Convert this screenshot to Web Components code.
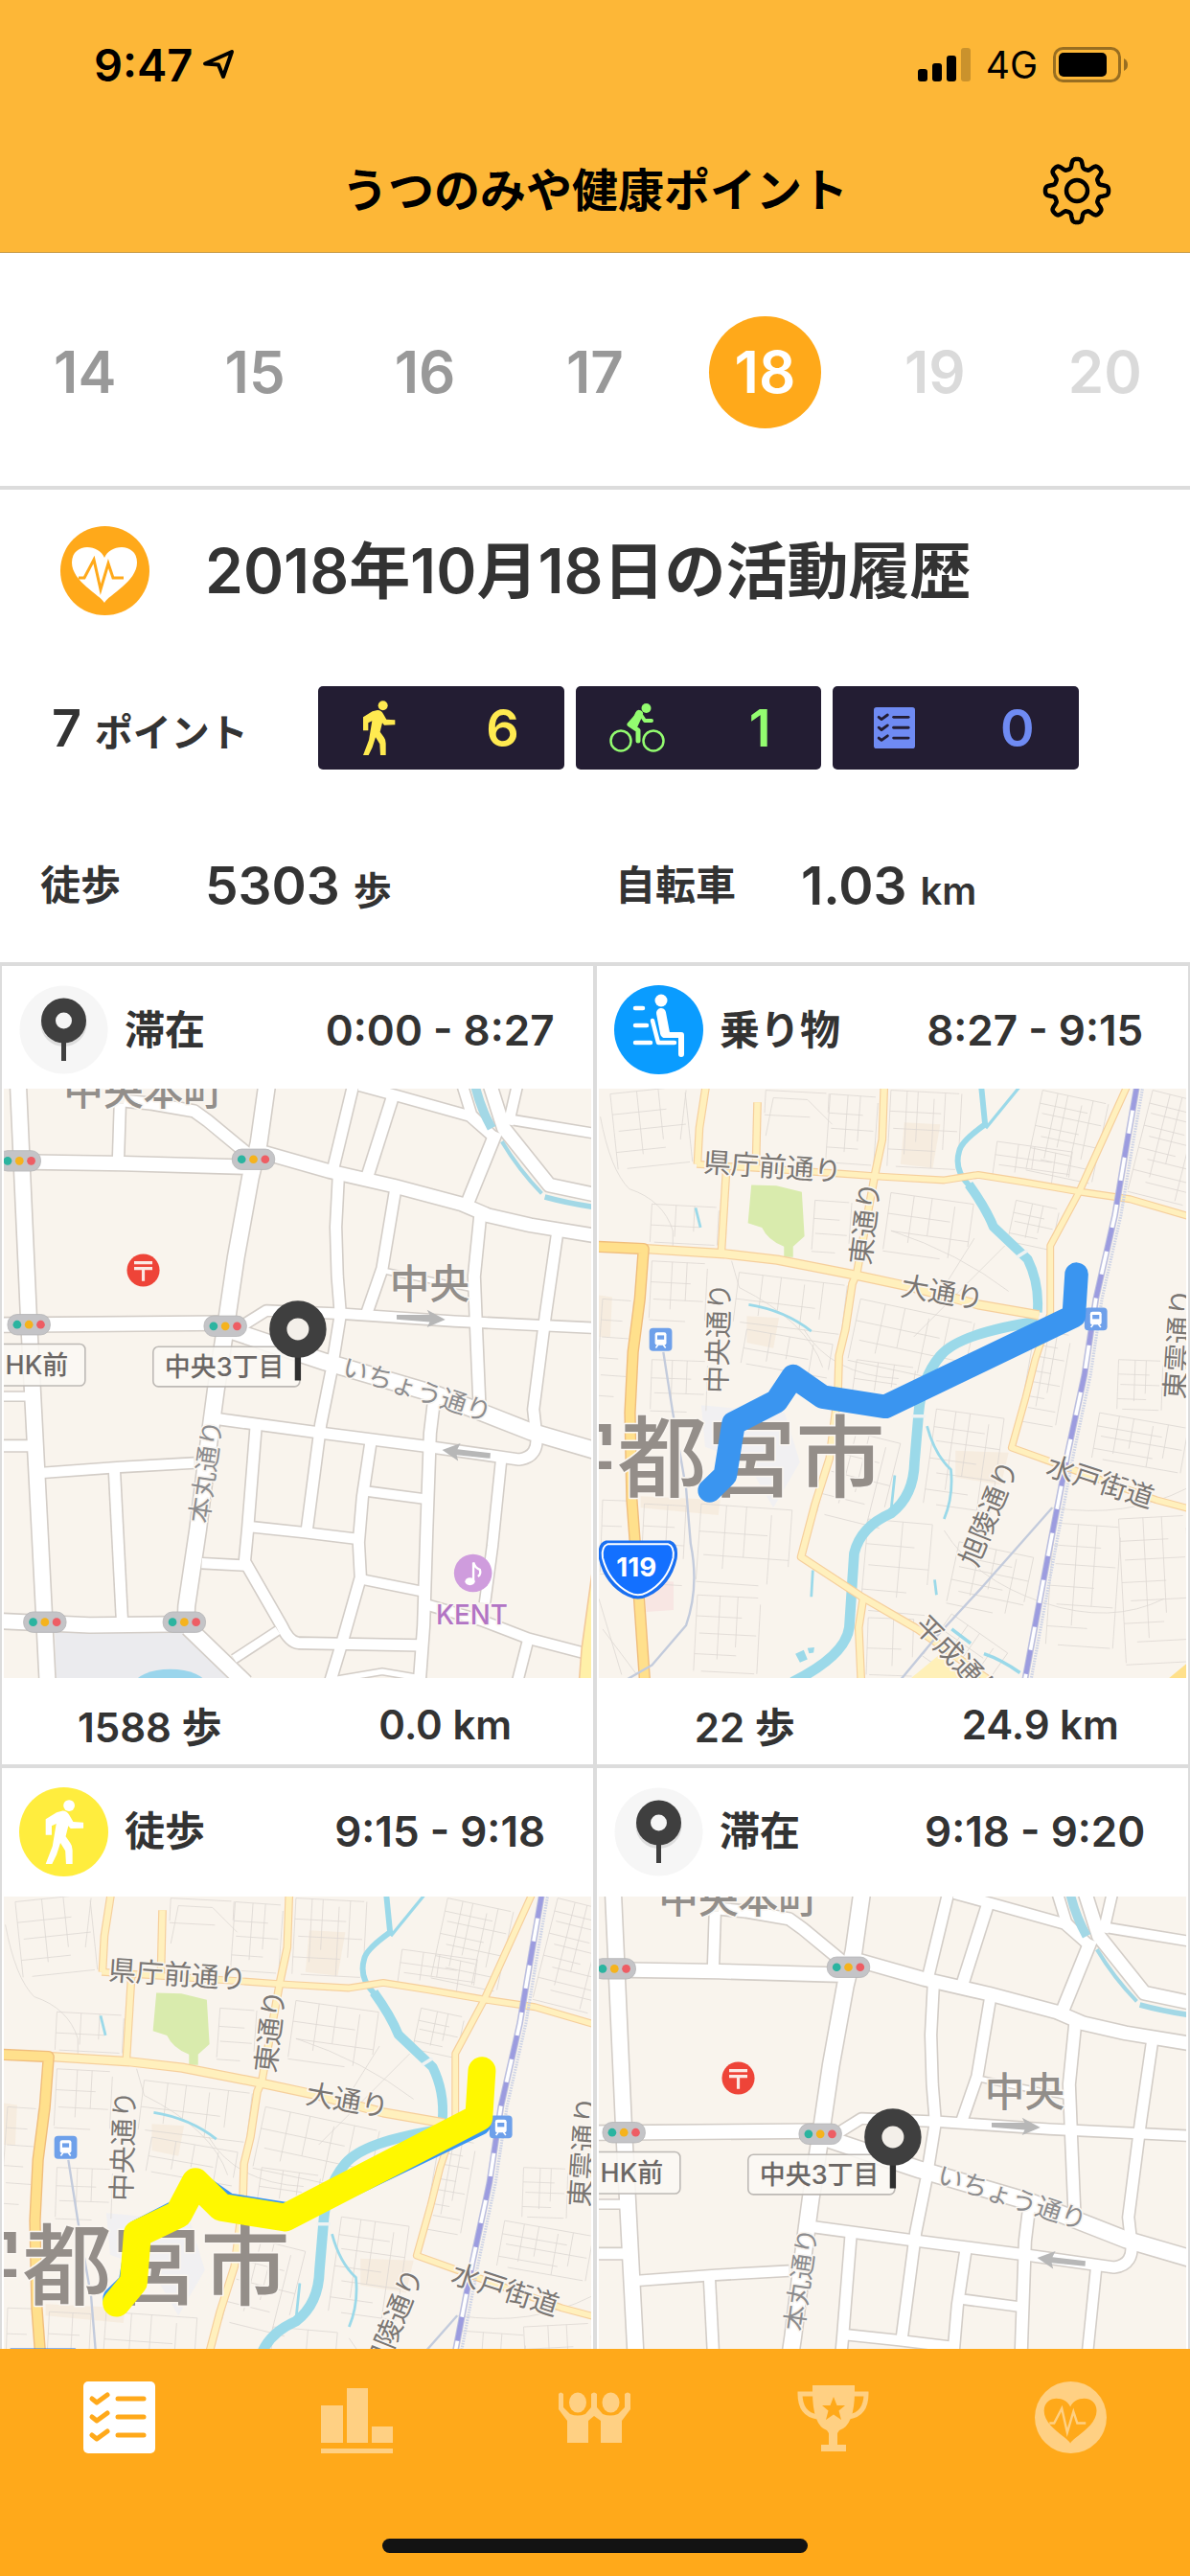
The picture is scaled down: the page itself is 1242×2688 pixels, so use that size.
<!DOCTYPE html>
<html lang="ja">
<head>
<meta charset="utf-8">
<meta name="viewport" content="width=device-width">
<title>うつのみや健康ポイント</title>
<style>
  html, body { margin: 0; height: 100%; }
  body { font-family: Inter, "Noto Sans CJK JP", sans-serif; color: #333; background: #fff; }
</style>
</head>
<body>
<health-app></health-app>

<script>
const define = (name, html, setup) => {
  const template = document.createElement('template');
  customElements.define(name, class extends HTMLElement {
    connectedCallback() {
      if (this.shadowRoot) return;
      template.innerHTML = typeof html === 'function' ? html(this) : html;
      this.attachShadow({ mode: 'open' }).append(template.content.cloneNode(true));
      if (setup) setup(this);
    }
  });
};

/* ---------- icons ---------- */

function gearPath() {
  const pts = [];
  for (let i = 0; i < 240; i++) {
    const a = i / 240 * Math.PI * 2;
    const wave = Math.tanh(1.9 * Math.cos(8 * a)) / Math.tanh(1.9);
    const r = 28.4 + 4.6 * wave;
    pts.push((36 + r * Math.sin(a)).toFixed(1) + ' ' + (36 - r * Math.cos(a)).toFixed(1));
  }
  return 'M' + pts.join('L') + 'Z';
}

const HEART = 'M46 80C42 72 12 58 12 38C12 27 20 22 28 22C36 22 43 26 46 33C49 26 56 22 64 22C72 22 80 27 80 38C80 58 50 72 46 80Z';
const PULSE = 'M19 54H25L35 35L42 66L50 39L55 54H66';
const WALK = '<circle cx="183" cy="108" r="15"/><path d="M150 126L166 122Q178 122 184 134L194 151L221 153V168L187 169L181 162L174 190L186 207Q192 215 192 226V263H175L173 228L160 207L150 238L138 263H121L139 216L149 156L137 162V186H121V144Z"/>';
const CHECKS = [18, 37, 56].map(y => `<path d="M9 ${y}L14 ${y + 4}L25 ${y - 4}" stroke-width="5"/><path d="M36 ${y}H63" stroke-width="5"/>`).join('');

const ICONS = {
  location: ['0 0 34 32', '<path d="M31 3L3 15.500L17 16.500L22 29Z" fill="none" stroke="currentColor" stroke-width="4" stroke-linejoin="round"/>'],
  signal: ['0 0 55 35', '<rect y="22" width="10" height="13" rx="3"/><rect x="15" y="16" width="10" height="19" rx="3"/><rect x="30" y="8" width="10" height="27" rx="3"/><rect x="45" width="10" height="35" rx="3" opacity=".2"/>'],
  battery: ['0 0 79 37', '<rect x="1.500" y="1.500" width="68" height="34" rx="9" fill="none" stroke="currentColor" stroke-width="3" opacity=".4"/><rect x="6" y="6" width="50" height="25" rx="5"/><path d="M74 12Q78 14 78 18.500T74 25Z" opacity=".4"/>'],
  gear: ['0 0 72 72', `<g fill="none" stroke="currentColor" stroke-width="4.500" stroke-linejoin="round"><path d="${gearPath()}"/><circle cx="36" cy="36" r="11"/></g>`],
  heart: ['0 0 93 93', `<circle cx="46.500" cy="46.500" r="46.500"/><path d="${HEART}" fill="var(--cut)"/><path d="${PULSE}" fill="none" stroke="currentColor" stroke-width="3"/>`],
  walk: ['112 90 120 178', WALK],
  bike: ['0 0 58 52', '<g fill="none" stroke="currentColor" stroke-linecap="round" stroke-linejoin="round"><circle cx="12" cy="39" r="10.500" stroke-width="2.500"/><circle cx="46" cy="39" r="10.500" stroke-width="2.500"/><path d="M29 13L21 22L30 28V39" stroke-width="5"/><path d="M31 11L26 22" stroke-width="8"/><path d="M33 12L37 18H44" stroke-width="4"/></g><circle cx="38.500" cy="5" r="5"/>'],
  list: ['0 0 75 75', `<rect width="75" height="75" rx="5"/><g fill="none" stroke="var(--cut)" stroke-linecap="round" stroke-linejoin="round">${CHECKS}</g>`],
  bars: ['0 0 75 75', '<path d="M0 25H23V64H0ZM27 7H49V64H27ZM53 47H75V64H53ZM0 70H75V75H0Z"/>'],
  people: ['0 0 75 75', '<ellipse cx="20" cy="22" rx="9" ry="10.500"/><ellipse cx="54.500" cy="22" rx="9" ry="10.500"/><path d="M9 64V41L0 29V13Q2 10 5 13V27L12 34Q20 37 28 34L34 27V13Q37 10 40 13V27L46 34Q54 37 62 34L69 27V13Q72 10 75 13V29L66 41V64H44V41L37 36L31 41V64Z"/>'],
  trophy: ['0 0 75 75', '<path d="M16 4H60V10Q60 46 44 51L42 54V66H51V73H25V66H33V54L31 51Q16 46 16 10Z"/><path d="M18 13H3Q3 34 21 37M57 13H72Q72 34 54 37" fill="none" stroke="currentColor" stroke-width="5"/><path d="M38 16L41.500 25H50L43.500 30.500L46 40L38 34.500L30 40L32.500 30.500L26 25H34.500Z" fill="var(--cut)"/>'],
  stay: ['0 0 93 93', '<circle cx="46.500" cy="46.500" r="46" fill="#f6f6f6"/><g fill="#ddd"><circle cx="46.500" cy="40" r="24"/></g><path d="M44 56H49V79H44Z"/><circle cx="46.500" cy="37" r="23.500"/><circle cx="46.500" cy="37" r="8.500" fill="#f6f6f6"/>'],
  ride: ['0 0 93 93', '<circle cx="46.500" cy="46.500" r="46.500" fill="#0a9cff"/><circle cx="49" cy="16" r="6.500" fill="#fff"/><g fill="none" stroke="#fff" stroke-linecap="round" stroke-linejoin="round"><path d="M49 29L53 50" stroke-width="10"/><path d="M54 52H70V72" stroke-width="6"/><path d="M40 37L46 60H63M22 24H30M22 42H34M22 60H38" stroke-width="4.500"/></g>'],
  steps: ['0 0 93 93', `<circle cx="46.500" cy="46.500" r="46.500" fill="#ffed3e"/><g fill="#fff" transform="translate(-20 -23.500) scale(.394)">${WALK}</g>`],
};

define('app-icon', el => {
  const [box, body] = ICONS[el.getAttribute('name')];
  return `<style>:host{display:block;flex:none;--cut:#fff}svg{display:block;width:100%;height:100%;fill:currentColor}</style>
  <svg viewBox="${box}" aria-hidden="true">${body}</svg>`;
});

/* ---------- chrome ---------- */

define('status-bar', `<style>
  :host { display: flex; align-items: center; justify-content: space-between; height: 134px; box-sizing: border-box; padding: 0 64px 0 98px; color: #000; }
  div { display: flex; align-items: center; }
  time { font-size: 47px; font-weight: 600; }
  .net { font-size: 39px; margin: 0 16px; }
  .loc { width: 34px; height: 32px; margin-left: 10px; }
  .sig { width: 55px; height: 35px; }
  .bat { width: 79px; height: 37px; }
</style>
<div><time>9:47</time><app-icon class="loc" name="location"></app-icon></div>
<div><app-icon class="sig" name="signal"></app-icon><span class="net">4G</span><app-icon class="bat" name="battery"></app-icon></div>`);

define('title-bar', `<style>
  :host { display: grid; grid-template-columns: 1fr auto 1fr; align-items: center; height: 130px; box-sizing: border-box; padding: 0 82px; color: #000; border-bottom: 1px solid #c9a052; }
  h1 { grid-column: 2; margin: 0; font-size: 48px; font-weight: 700; line-height: 64px; }
  button { justify-self: end; padding: 0; border: 0; background: none; color: inherit; }
  app-icon { width: 72px; height: 72px; }
</style>
<h1><slot></slot></h1>
<button aria-label="設定"><app-icon name="gear"></app-icon></button>`);

define('day-strip', `<style>
  :host { display: grid; grid-template-columns: repeat(7, 1fr); place-items: center; height: 247px; box-sizing: border-box; padding-top: 6px; border-bottom: 4px solid #dcdcdc; }
  button { width: 117px; height: 117px; padding: 0; border: 0; border-radius: 50%; background: none; font: 600 60px/117px Inter, sans-serif; color: #999; }
  .on { background: #ffa91a; color: #fff; }
  :disabled { color: #dadada; }
</style>`, el => {
  for (let d = 14; d <= 20; d++) {
    const b = document.createElement('button');
    b.textContent = d;
    if (d === 18) b.className = 'on';
    b.disabled = d > 18;
    el.shadowRoot.append(b);
  }
});

define('point-tile', el => `<style>
  :host { display: grid; grid-template-columns: 1fr 1fr; place-items: center; height: 87px; border-radius: 5px; background: #231d33; font-size: 54px; font-weight: 600; }
  app-icon { width: var(--w); height: var(--h); --cut: #231d33; }
</style>
<app-icon name="${el.getAttribute('icon')}"></app-icon><span><slot></slot></span>`);

define('day-summary', `<style>
  :host { display: block; }
  .head { display: flex; align-items: center; gap: 58px; height: 169px; padding-left: 63px; }
  .head app-icon { width: 93px; height: 93px; color: #ffa91a; }
  h2 { margin: 0; font-size: 64px; font-weight: 600; line-height: 90px; white-space: nowrap; }
  .points { display: flex; align-items: center; height: 159px; padding: 0 116px 0 54px; }
  .points p { flex: 0 0 278px; margin: 0; font-size: 54px; font-weight: 600; }
  small { font-size: 40px; font-weight: 600; }
  .tiles { flex: 1; display: grid; grid-template-columns: repeat(3, 1fr); gap: 12px; }
  .walk { color: #ffea50; --w: 40px; --h: 60px; }
  .bike { color: #93fc70; --w: 58px; --h: 52px; }
  .list { color: #6f8bf3; --w: 43px; --h: 43px; }
  dl { display: grid; grid-template-columns: 172fr 428fr 194fr 406fr; align-items: start; height: 165px; box-sizing: border-box; margin: 0; padding: 45px 0 0 42px; }
  dt { font-size: 42px; font-weight: 600; line-height: 80px; }
  dd { margin: 0; font-size: 55px; font-weight: 600; line-height: 80px; }
</style>
<div class="head"><app-icon name="heart"></app-icon><h2>2018年10月18日の活動履歴</h2></div>
<div class="points"><p>7 <small>ポイント</small></p>
  <div class="tiles">
    <point-tile class="walk" icon="walk">6</point-tile>
    <point-tile class="bike" icon="bike">1</point-tile>
    <point-tile class="list" icon="list">0</point-tile>
  </div>
</div>
<dl><dt>徒歩</dt><dd>5303 <small>歩</small></dd><dt>自転車</dt><dd>1.03 <small>km</small></dd></dl>`);

/* ---------- maps ---------- */

const MAP_CSS = `:host{display:block}svg{display:block;width:100%;height:auto}
  text{font-family:Inter,"Noto Sans CJK JP",sans-serif;paint-order:stroke;stroke:#faf6f1;stroke-width:8px;stroke-linejoin:round}
  .r{fill:none;stroke-linejoin:round}`;

const lines = (list, color, extra) => list.map(([w, d]) =>
  `<path class="r" d="M${d}" stroke="${color}" stroke-width="${w + extra}"/>`).join('');

const STREETS = [
  [40, '52 350L79 950L110 1545L129 1920'], [36, '0 548L330 553L650 562'], [28, '320 395L315 550'],
  [30, '330 388L400 395L515 415L550 440L665 535'],
  [42, '706 350L685 500L663 590L625 800L603 950L572 1150L548 1330L525 1516L495 1718L493 1770'],
  [34, '690 522L730 533L870 573L1040 612L1220 660L1290 690L1400 715L1570 743'],
  [28, '933 350L880 570'], [28, '895 585L888 720L892 850L900 950L876 1100L848 1240L812 1515'],
  [30, '1040 370L970 590'], [28, '1045 620L1010 830L970 945'], [26, '950 348L1050 375L1240 428L1305 485'],
  [26, '1222 350L1245 425L1305 485'], [34, '1295 350L1330 460L1450 610L1570 635'], [26, '1365 350L1342 450'],
  [24, '1345 437L1570 474'], [32, '1310 470L1235 655'], [30, '1268 690L1252 850L1258 1000L1266 1190'],
  [28, '1471 735L1440 950L1408 1200L1415 1262Q1425 1325 1370 1332L1130 1298L850 1262L575 1225'],
  [36, '0 978L590 973'], [26, '625 990L705 940L900 948L1200 968L1570 986'],
  [42, '605 990L860 1075L1150 1160L1400 1258L1570 1308'],
  [30, '1146 1180L1136 1263L1127 1516L1119 1769L1108 1920'],
  [28, '678 1240L656 1516L648 1600L745 1769Q765 1813 790 1815L1110 1821'],
  [26, '535 1605L650 1611'], [26, '655 1508L805 1524L945 1541'],
  [28, '980 1285L958 1432L948 1550L953 1642L905 1811L872 1920'],
  [24, '965 1415L1125 1436'], [24, '955 1647L1120 1680'], [22, '620 1857L735 1782'],
  [40, '500 1775L650 1920'], [38, '0 1757L240 1768L500 1765'], [26, '115 1367L320 1352L515 1341'],
  [28, '305 1360L325 1750'], [22, '0 1166L85 1166'], [28, '0 1296L95 1296'],
  [26, '1323 1335L1300 1560L1280 1710'], [26, '1120 1712L1270 1755L1395 1803L1545 1842'],
  [26, '1395 1803L1365 1920'], [14, '880 1912L1010 1890L1110 1907'], [12, '1012 835L1245 882'],
];

const lights = (x, y) => `<g transform="translate(${x} ${y})"><rect x="-56" y="-27" width="112" height="54" rx="25" fill="#c4c4c7" stroke="#b4b4b6" stroke-width="2"/>
  <circle cx="-31" r="11" fill="#2bb4a0"/><circle r="11" fill="#f5b31d"/><circle cx="31" r="11" fill="#ee5d64"/></g>`;

define('stay-map', `<style>${MAP_CSS}
  .area{font-size:105px;font-weight:500;fill:#928e8a}.road{font-size:68px;fill:#8c8c8e}.stop{font-size:68px;font-weight:500;fill:#6b6765;stroke:none}
</style>
<svg viewBox="14 356 1546 1551" role="img">
  <rect x="0" y="340" width="1570" height="1600" fill="#f9f4ed"/>
  <path d="M148 1785H505L625 1920H152Z" fill="#ebebee"/><ellipse cx="452" cy="1926" rx="95" ry="42" fill="#9ad5ec"/>
  ${lines(STREETS, '#d3cdc7', 8)}
  ${lines(STREETS, '#fff', 0)}
  <g class="r" stroke="#a3d8e6"><path d="M1255 350Q1270 410 1298 460" stroke-width="24"/><path d="M1325 495Q1370 570 1430 632" stroke-width="10"/><path d="M1438 641Q1500 658 1570 668" stroke-width="14"/></g>
  <path d="M1572 1560L1535 1830L1528 1920H1572Z" fill="#fff0a8" stroke="#f3c99a" stroke-width="4"/>
  ${lights(55, 546)}${lights(671, 542)}${lights(80, 977)}${lights(597, 981)}${lights(122, 1760)}${lights(489, 1760)}
  <circle cx="381" cy="834" r="43" fill="#ee4438"/><path d="M357 814H405M357 829H405M381 829V862" stroke="#fbe9e4" stroke-width="8"/>
  <g fill="#b7b7b7"><path d="M1048 951H1135L1128 938L1176 964L1128 984L1135 970L1048 963Z"/><path d="M1295 1315L1208 1305L1216 1289L1168 1307L1210 1336L1206 1320L1294 1329Z"/></g>
  <text class="area" x="171" y="399">中央本町</text>
  <text class="area" x="1030" y="909">中央</text>
  <text class="road" transform="translate(900 1108) rotate(18)">いちょう通り</text>
  <text class="road" text-anchor="middle" transform="translate(570 1367) rotate(-82)">本丸通り</text>
  <g fill="#fbf8f4" fill-opacity=".88" stroke="#bdb9b5" stroke-width="4"><rect x="-40" y="1028" width="268" height="110" rx="14"/><rect x="407" y="1035" width="386" height="105" rx="14"/></g>
  <text class="stop" x="18" y="1108">HK前</text>
  <text class="stop" x="437" y="1112">中央3丁目</text>
  <path d="M780 1050H796V1124H780Z" fill="#2f2f2f"/><circle cx="788" cy="989" r="52" fill="#f3efe9" stroke="#3f3f3f" stroke-width="46"/>
  <circle cx="1249" cy="1631" r="50" fill="#cf9cdd"/><ellipse cx="1241" cy="1653" rx="13" ry="10" fill="#fff"/><path d="M1250 1653V1603Q1255 1618 1267 1622Q1271 1634 1262 1640" fill="none" stroke="#fff" stroke-width="6"/>
  <text x="1246" y="1766" text-anchor="middle" font-size="70" font-weight="500" fill="#b274c4">KENT</text>
</svg>`);

function blocks(x, y, w, h, angle, cols, rows) {
  let d = '';
  for (let i = 0; i <= cols; i++) {
    const px = Math.round(w * i / cols + (i % 2 ? 7 : 0)), cut = (i * 37) % 5 * h / 12;
    d += `M${px} ${Math.round(i % 3 ? 0 : cut)}V${Math.round(i % 3 ? h - cut : h)}`;
  }
  for (let j = 0; j <= rows; j++) {
    const py = Math.round(h * j / rows + (j % 2 ? 5 : 0)), cut = (j * 53) % 7 * w / 16;
    d += `M${Math.round(j % 2 ? 0 : cut)} ${py}H${Math.round(j % 2 ? w - cut : w)}`;
  }
  return `<path transform="translate(${x} ${y}) rotate(${angle})" d="${d}"/>`;
}

const LANES = [
  blocks(40, 360, 190, 200, -6, 3, 4), blocks(450, 350, 160, 60, 3, 1, 1), blocks(620, 360, 120, 180, 4, 3, 4),
  blocks(780, 350, 180, 200, 3, 5, 4), blocks(1180, 350, 170, 210, 12, 5, 7), blocks(1060, 485, 200, 90, 8, 4, 3),
  blocks(1470, 350, 160, 270, 14, 4, 9), blocks(150, 650, 170, 100, 3, 3, 2), blocks(580, 640, 90, 130, 4, 1, 3),
  blocks(780, 620, 220, 150, 8, 4, 3), blocks(1110, 640, 110, 110, 12, 3, 4), blocks(20, 900, 75, 250, 4, 1, 5),
  blocks(150, 800, 140, 150, 3, 3, 3), blocks(380, 830, 280, 130, 7, 5, 2), blocks(400, 980, 230, 90, 10, 4, 2),
  blocks(700, 900, 300, 160, 12, 5, 3), blocks(690, 1060, 150, 90, 8, 3, 2), blocks(150, 1060, 140, 130, 2, 3, 3),
  blocks(900, 1190, 180, 250, 8, 4, 6), blocks(1160, 980, 90, 240, 10, 3, 7), blocks(1380, 1060, 110, 130, 2, 3, 4),
  blocks(1330, 1200, 230, 120, 10, 5, 4), blocks(640, 1240, 170, 230, 14, 4, 4), blocks(20, 1430, 70, 190, 2, 1, 3),
  blocks(130, 1440, 110, 210, 3, 2, 4), blocks(280, 1440, 240, 200, 4, 4, 3), blocks(270, 1680, 160, 200, 3, 3, 4),
  blocks(720, 1480, 170, 240, 5, 2, 4), blocks(960, 1540, 200, 160, 12, 4, 5), blocks(1210, 1490, 170, 320, 4, 3, 6),
  blocks(1380, 1480, 170, 380, -3, 3, 7), blocks(940, 1730, 180, 130, 35, 4, 3), blocks(720, 1740, 120, 150, 2, 2, 2),
  '<path d="M14 420Q40 560 90 610Q180 640 205 720V760M240 350L225 480M450 470L470 370L560 375L625 440M780 720Q960 780 1090 880M1000 740L900 900M840 1000Q960 880 1080 760M550 980Q620 1100 800 1110M1205 1450Q1400 1480 1558 1400M360 800L380 870Q560 960 600 1080M20 1770L110 1890M10 1690L70 1890M920 1510Q1000 1640 1180 1700T1500 1690"/>',
].join('');

const AVENUES = [
  [16, '292 340L275 450L270 545'], [16, '428 382L424 550'], [14, '268 545L650 570L760 578L920 587L1010 573L1130 592L1280 618L1410 637L1570 684'],
  [16, '346 560L333 775'], [16, '762 340L757 480L738 570L690 832L678 860L660 980L643 1050L640 1150L618 1320L580 1440L543 1580L700 1683L850 1770L1060 1920'],
  [14, '1402 340L1275 620L1200 760L1200 940L1160 1060L1135 1160L1098 1292L1190 1325L1480 1430L1570 1454'],
  [16, '708 1682L695 1766L702 1920'], [20, '135 768L340 781L480 797L690 838L830 868L1010 915L1170 943'],
];
const HIGHWAY = [[24, '0 762L128 768L118 900L100 1040L92 1200L97 1430L112 1632L132 1920']];
const RAIL = 'M1428 340L1400 500L1370 680L1320 900L1290 1100L1245 1310L1200 1545L1130 1920';

const station = (x, y) => `<g transform="translate(${x} ${y})"><rect x="-30" y="-30" width="60" height="60" rx="10" fill="#6ea0ea"/><rect x="-15" y="-19" width="30" height="34" rx="6" fill="#fff"/><path d="M-9 -11H9V0H-9Z" fill="#6ea0ea"/><path d="M-13 22L-7 14M13 22L7 14" stroke="#fff" stroke-width="4"/></g>`;

define('route-map', el => {
  const walked = el.getAttribute('mode') === 'walk';
  return `<style>${MAP_CSS}
  .road{font-size:73px;fill:#7a7673}.city{font-size:235px;font-weight:500;fill:#948e89}
</style>
<svg viewBox="10 346 1548 1553" role="img">
  <rect x="0" y="330" width="1580" height="1600" fill="#f9f4ed"/>
  <g fill="#f6ecdf"><path d="M815 435L910 440L890 555L805 545Z"/><path d="M400 945L485 950L470 1030L400 1015Z"/><path d="M950 1300L1090 1305L1070 1390L950 1370Z"/><path d="M10 890L45 895L40 1000H10Z"/><path d="M120 1420L330 1430L325 1470L120 1450Z"/></g>
  <path d="M130 1640L207 1645V1720L135 1725Z" fill="#f8e6e3"/><path d="M280 1180L500 1200L540 1330L470 1450L400 1330L290 1290Z" fill="#f1f0f2"/>
  <g class="r" stroke="#ddd8d3" stroke-width="2">${LANES}</g>
  <path d="M412 600L478 602L545 618L552 735L522 762V790H498V762Q455 745 440 712L403 700Z" fill="#d9ebad"/>
  <g class="r" stroke="#9bd9e9"><path d="M1018 340L1028 440Q965 485 960 510Q945 560 985 600" stroke-width="15"/><path d="M1120 340L1030 450" stroke-width="8"/>
    <path d="M985 598Q1030 660 1050 710L1140 795Q1172 860 1166 935" stroke-width="25"/><path d="M1166 960Q960 990 910 1050Q860 1110 853 1200L842 1330Q840 1420 780 1465Q700 1500 683 1570L670 1766Q660 1840 520 1910" stroke-width="27"/>
    <path d="M875 1235Q895 1310 938 1350Q945 1420 920 1480M790 1365L780 1460M574 1615L570 1685M895 1640L900 1680M265 660L278 712M405 915Q500 930 570 985" stroke-width="7"/><path d="M940 1770L990 1808M1025 1835Q1070 1850 1120 1885" stroke-width="9"/></g>
  <path d="M528 1835L550 1825L560 1850L540 1858ZM560 1820L578 1818L576 1832L564 1834Z" fill="#9bd9e9"/><path d="M1112 790L1140 772M835 1209H870" stroke="#eef2f2" stroke-width="9"/>
  <path d="M820 1910L905 1840L1000 1910Z" fill="#fff0b8"/><path d="M1500 1910L1560 1860V1910Z" fill="#ffe08a"/>
  ${lines(AVENUES, '#f6cf9c', 6)}${lines(AVENUES, '#fff0bd', 0)}
  ${lines(HIGHWAY, '#f0bd7c', 7)}${lines(HIGHWAY, '#ffe08c', 0)}
  <g class="r"><path d="M180 1040L205 1200L240 1400L252 1545Q275 1660 240 1760L150 1865L80 1905M1205 1450L1020 1660L900 1790L800 1910" stroke="#c3cbdc" stroke-width="6"/>
    <path d="${RAIL}" transform="translate(16 0)" stroke="#cdd3e6" stroke-width="8" stroke-dasharray="4 3"/>
    <path d="${RAIL}" stroke="#bcbfdf" stroke-width="17"/><path d="${RAIL}" stroke="#fff" stroke-width="9"/><path d="${RAIL}" stroke="#9c9cdf" stroke-width="12" stroke-dasharray="64 62"/></g>
  ${station(173, 1007)}${station(1320, 953)}
  <text class="road" transform="translate(284 565) rotate(4)">県庁前通り</text>
  <text class="road" text-anchor="middle" transform="translate(738 704) rotate(-83)">東通り</text>
  <text class="road" transform="translate(803 890) rotate(10)">大通り</text>
  <text class="road" text-anchor="middle" transform="translate(351 1004) rotate(-88)">中央通り</text>
  <text class="road" text-anchor="middle" transform="translate(1563 1020) rotate(-86)">東雲通り</text>
  <text class="road" transform="translate(1185 1362) rotate(18)">水戸街道</text>
  <text class="road" text-anchor="middle" transform="translate(1062 1474) rotate(-68)">旭陵通り</text>
  <text class="road" transform="translate(837 1766) rotate(45)">平成通り</text>
  <text class="city" x="-176" y="1404">宇都宮市</text>
  <path d="M28 1537H198Q222 1545 216 1585Q200 1655 140 1684Q113 1698 86 1684Q26 1655 10 1585Q4 1545 28 1537Z" fill="#1a6ff0"/>
  <path d="M34 1546H192Q210 1552 206 1582Q190 1645 136 1674Q113 1686 90 1674Q36 1645 20 1582Q16 1552 34 1546Z" fill="#1370ff" stroke="#fff" stroke-width="5"/>
  <text x="109" y="1632" text-anchor="middle" font-size="70" font-weight="700" fill="#fff" style="stroke:none">119</text>
  <path class="r" d="M1269 835L1262 945L765 1184L600 1158L522 1104L478 1170L365 1228L343 1365L302 1405" stroke="#3a95f0" stroke-width="62" stroke-linecap="round"/>
  ${walked ? '<path class="r" d="M1270 805L1262 928L752 1192L583 1165L515 1098L470 1183L362 1235L352 1362L307 1417" stroke="#fff800" stroke-width="73" stroke-linecap="round"/>' : ''}
</svg>`;
});

/* ---------- activity cards ---------- */

define('activity-card', el => `<style>
  :host { display: flex; flex-direction: column; background: #fff; }
  header { display: grid; grid-template-columns: 93px 17fr 18fr; align-items: center; padding: 20px 40px var(--map-gap) 18px; height: 92px; }
  app-icon { width: 93px; height: 93px; color: #3f3f3f; }
  h3 { margin: 0 0 0 17px; font-size: 42px; font-weight: 600; line-height: 60px; white-space: nowrap; }
  time { justify-self: center; font-size: 44px; font-weight: 600; line-height: 60px; white-space: nowrap; }
  .map { padding: 0 2px; }
  footer { display: grid; grid-template-columns: 1fr 1fr; place-items: center; height: 82px; padding-top: 8px; font-size: 42px; font-weight: 600; }
</style>
<header><app-icon name="${el.getAttribute('icon')}"></app-icon><h3>${el.getAttribute('label')}</h3><time>${el.getAttribute('time')}</time></header>
<div class="map"><slot></slot></div>
${el.hasAttribute('steps') ? `<footer><span>${el.getAttribute('steps')} 歩</span><span>${el.getAttribute('distance')} km</span></footer>` : ''}`);

define('activity-grid', `<style>
  :host { display: grid; grid-template-columns: 1fr 1fr; gap: 4px; padding: 4px 2px 0; background: #dcdcdc; }
  activity-card { --map-gap: 16px; }
  activity-card:nth-of-type(n+3) { --map-gap: 22px; }
</style>
<activity-card icon="stay" label="滞在" time="0:00 - 8:27" steps="1588" distance="0.0"><stay-map></stay-map></activity-card>
<activity-card icon="ride" label="乗り物" time="8:27 - 9:15" steps="22" distance="24.9"><route-map></route-map></activity-card>
<activity-card icon="steps" label="徒歩" time="9:15 - 9:18"><route-map mode="walk"></route-map></activity-card>
<activity-card icon="stay" label="滞在" time="9:18 - 9:20"><stay-map></stay-map></activity-card>`);

define('tab-bar', `<style>
  :host { display: flex; flex-direction: column; justify-content: space-between; flex: none; height: 237px; box-sizing: border-box; padding: 34px 0 24px; background: #ffa91a; }
  nav { display: grid; grid-template-columns: repeat(5, 1fr); justify-items: center; }
  button { padding: 0; border: 0; background: none; color: #ffd083; }
  .on { color: #fff; }
  app-icon { width: 75px; height: 75px; --cut: #ffa91a; }
  .home { align-self: center; width: 444px; height: 15px; border-radius: 8px; background: #131313; }
</style>
<nav>
  <button class="on" aria-label="履歴"><app-icon name="list"></app-icon></button>
  <button aria-label="グラフ"><app-icon name="bars"></app-icon></button>
  <button aria-label="グループ"><app-icon name="people"></app-icon></button>
  <button aria-label="ランキング"><app-icon name="trophy"></app-icon></button>
  <button aria-label="健康"><app-icon name="heart"></app-icon></button>
</nav>
<div class="home"></div>`);

define('health-app', `<style>
  :host { display: flex; flex-direction: column; height: 100vh; }
  .top { flex: none; background: #fdb737; }
  main { flex: 1; min-height: 0; overflow-y: auto; scrollbar-width: none; }
</style>
<div class="top"><status-bar></status-bar><title-bar>うつのみや健康ポイント</title-bar></div>
<main><day-strip></day-strip><day-summary></day-summary><activity-grid></activity-grid></main>
<tab-bar></tab-bar>`);
</script>
</body>
</html>
